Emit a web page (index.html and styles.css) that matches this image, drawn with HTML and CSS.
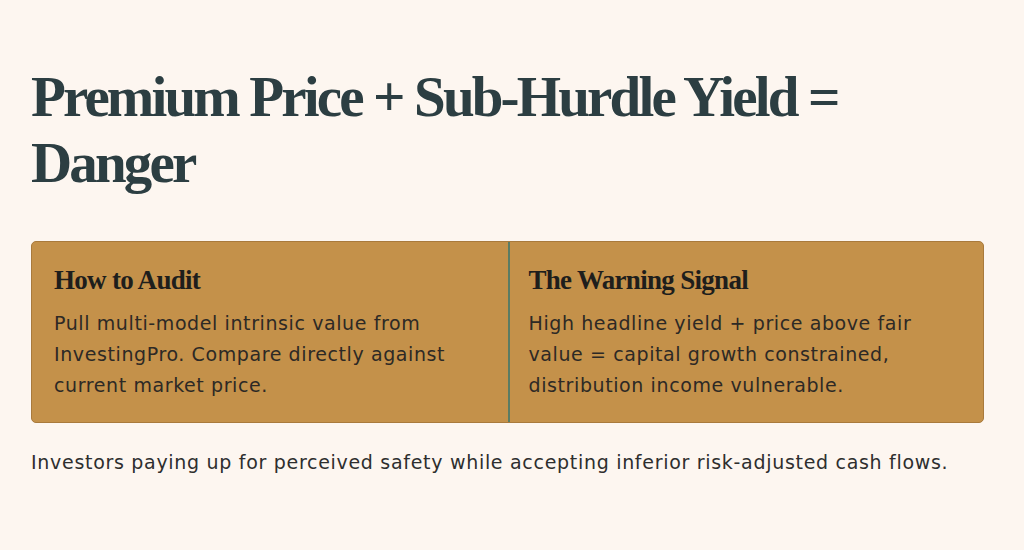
FILE: index.html
```html
<!DOCTYPE html>
<html lang="en">
<head>
<meta charset="utf-8">
<title>Premium Price + Sub-Hurdle Yield = Danger</title>
<link rel="stylesheet" href="styles.css">
</head>
<body>
<main class="slide">
  <h1 class="title">Premium Price + Sub-Hurdle Yield = Danger</h1>
  <section class="panel">
    <div class="col">
      <h2 class="col-title">How to Audit</h2>
      <p class="col-text">Pull multi-model intrinsic value from InvestingPro. Compare directly against current market price.</p>
    </div>
    <div class="col col-right">
      <h2 class="col-title">The Warning Signal</h2>
      <p class="col-text">High headline yield + price above fair value = capital growth constrained, distribution income vulnerable.</p>
    </div>
  </section>
  <p class="note">Investors paying up for perceived safety while accepting inferior risk-adjusted cash flows.</p>
</main>
</body>
</html>
```

FILE: styles.css
```css
html, body {
  margin: 0;
  padding: 0;
  background: #fdf6f0;
}
.slide {
  width: 953px;
  padding: 64px 0 0 31px;
  font-family: "DejaVu Sans", "Open Sans", sans-serif;
}
.title {
  margin: 0;
  font-family: "Liberation Serif", "DejaVu Serif", serif;
  font-weight: 700;
  font-size: 57px;
  line-height: 66px;
  letter-spacing: -2.85px;
  color: #2c3e42;
}
.panel {
  margin-top: 45px;
  display: grid;
  grid-template-columns: 1fr 1fr;
  background: #c4914a;
  border: 1px solid #a97a3c;
  border-radius: 5px;
}
.col {
  padding: 22px 22px 21px 22px;
}
.col-right {
  border-left: 2px solid #5a7c64;
  padding-left: 19px;
}
.col-title {
  margin: 0 0 12px 0;
  font-family: "Liberation Serif", "DejaVu Serif", serif;
  font-weight: 700;
  font-size: 27px;
  line-height: 32px;
  letter-spacing: -0.7px;
  color: #1e1e1c;
}
.col-text {
  margin: 0;
  font-size: 19px;
  line-height: 31px;
  letter-spacing: 0.6px;
  color: #2d2925;
}
.note {
  margin: 24px 0 0 0;
  font-size: 19px;
  line-height: 31px;
  letter-spacing: 0.7px;
  color: #2e2e2e;
}
```
